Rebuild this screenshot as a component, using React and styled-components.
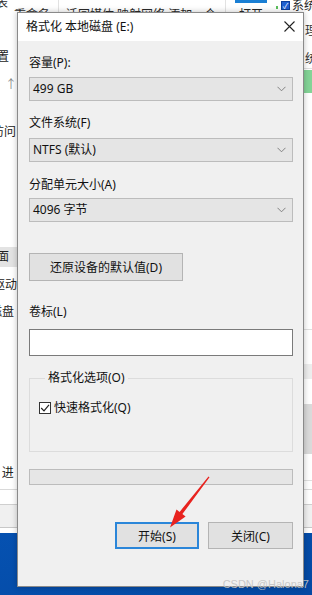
import React from 'react';
import styled, { createGlobalStyle } from 'styled-components';

const GlobalStyle = createGlobalStyle`
  html, body {
    margin: 0;
    padding: 0;
  }
  body {
    width: 312px;
    height: 595px;
    overflow: hidden;
    font-family: "Noto Sans", "Noto Sans CJK SC", sans-serif;
    font-size: 12px;
    color: #1a1a1a;
  }
`;

const Chevron = () => (
  <svg width="9" height="6" viewBox="0 0 9 6">
    <polyline points="0.5,0.8 4.5,4.8 8.5,0.8" fill="none" stroke="#777" strokeWidth="0.9" />
  </svg>
);

const CloseIcon = () => (
  <svg width="11" height="11" viewBox="0 0 11 11">
    <path d="M0.5 0.5 L10.5 10.5 M10.5 0.5 L0.5 10.5" stroke="#222" strokeWidth="1.1" />
  </svg>
);

const CheckMark = () => (
  <svg width="10" height="10" viewBox="0 0 10 10">
    <polyline points="1.2,5 4,7.8 9,1.8" fill="none" stroke="#222" strokeWidth="1.2" />
  </svg>
);

const App = () => {
  return (
    <>
      <GlobalStyle />
      <Desktop>
        <Explorer>
          <Ribbon>
            <RibbonClip>
              <RibbonText $x={-4} $y={-5}>表</RibbonText>
              <RibbonText $x={14} $y={7}>重命名</RibbonText>
              <RibbonSep $x={58} />
              <RibbonText $x={66} $y={7}>迁回媒体 映射网络 添加一个</RibbonText>
              <RibbonSep $x={225} />
              <OpenBlock>
                <BlueBar />
                <RibbonLabel>打开</RibbonLabel>
              </OpenBlock>
              <MiniDot />
              <MiniCheck>✓</MiniCheck>
              <RibbonText $x={292} $y={-2}>系统</RibbonText>
            </RibbonClip>
          </Ribbon>
          <ExplorerBody>
            <NavPane>
              <NavItem $mt={29} $pr={8}>位置</NavItem>
              <NavItem $mt={12} $muted>↑</NavItem>
              <NavItem $mt={31} $pr={1}>访问</NavItem>
              <NavItem $mt={107} $selected>面</NavItem>
              <NavItem $mt={10}>驱动</NavItem>
              <NavItem $mt={11} $pr={3}>磁盘</NavItem>
              <NavItem $mt={145}>l&nbsp;&nbsp;进&nbsp;</NavItem>
            </NavPane>
            <Covered />
            <SidePane>
              <SideText $mt={3}>理</SideText>
              <SideText $mt={12}>统</SideText>
              <SideLine $mt={1} />
              <GreenBar />
              <SideLine $mt={236} />
              <SideBand $mt={34} $h={15} />
              <SideBand $mt={25} $h={50} $dark />
              <SideLine $mt={26} />
            </SidePane>
          </ExplorerBody>
          <Footer>
            <StatusBand />
          </Footer>
        </Explorer>

        <Dialog>
          <TitleBar>
            <Title>格式化 本地磁盘 (E:)</Title>
            <CloseIcon />
          </TitleBar>
          <Body>
            <Label $mt={14}>容量(P):</Label>
            <Combo $mt={6}>
              <span>499 GB</span>
              <Chevron />
            </Combo>
            <Label $mt={14}>文件系统(F)</Label>
            <Combo $mt={7}>
              <span>NTFS (默认)</span>
              <Chevron />
            </Combo>
            <Label $mt={15}>分配单元大小(A)</Label>
            <Combo $mt={5}>
              <span>4096 字节</span>
              <Chevron />
            </Combo>
            <RestoreButton>还原设备的默认值(D)</RestoreButton>
            <Label $mt={23}>卷标(L)</Label>
            <TextInput />
            <GroupBox>
              <Legend>格式化选项(O)</Legend>
              <CheckRow>
                <CheckBox>
                  <CheckMark />
                </CheckBox>
                快速格式化(Q)
              </CheckRow>
            </GroupBox>
            <Progress />
            <ButtonRow>
              <DialogButton $primary>开始(S)</DialogButton>
              <DialogButton>关闭(C)</DialogButton>
            </ButtonRow>
          </Body>
        </Dialog>

        <Arrow viewBox="0 0 312 595">
          <polygon
            points="209.5,477.3 182.4,514.1 185.6,516.5 170,527.5 176.5,509.6 179.6,511.9 208.5,476.6"
            fill="#e8231f"
          />
        </Arrow>
        <Watermark>CSDN @Halona7</Watermark>
      </Desktop>
    </>
  );
};

export default App;

const Desktop = styled.div`
  position: relative;
  width: 312px;
  height: 595px;
  overflow: hidden;
  background: linear-gradient(165deg, #0d6fd6 0%, #085ec6 45%, #0449a3 100%);
`;

const Explorer = styled.div`
  height: 533px;
  background: #ffffff;
  display: flex;
  flex-direction: column;
`;

const Ribbon = styled.div`
  height: 20px;
  flex-shrink: 0;
  background: #ffffff;
`;

const RibbonClip = styled.div`
  position: relative;
  height: 12px;
  overflow: hidden;
`;

const RibbonText = styled.span`
  position: absolute;
  left: ${(p) => p.$x}px;
  top: ${(p) => p.$y}px;
  line-height: 16px;
  white-space: nowrap;
  color: #2b2b2b;
`;

const RibbonSep = styled.div`
  position: absolute;
  left: ${(p) => p.$x}px;
  top: 0;
  width: 1px;
  height: 12px;
  background: #e2e2e2;
`;

const OpenBlock = styled.div`
  position: absolute;
  left: 235px;
  top: 0;
  width: 32px;
  display: flex;
  flex-direction: column;
  align-items: center;
`;

const BlueBar = styled.div`
  width: 32px;
  height: 3px;
  background: #1a7fd4;
`;

const RibbonLabel = styled.span`
  margin-top: 4px;
  line-height: 16px;
  color: #2b2b2b;
`;

const MiniDot = styled.div`
  position: absolute;
  left: 276px;
  top: 6px;
  width: 2px;
  height: 3px;
  background: #5bbf5b;
`;

const MiniCheck = styled.div`
  position: absolute;
  left: 281px;
  top: 1px;
  width: 9px;
  height: 9px;
  background: #1f5fd0;
  border: 1px solid #0c3f9a;
  box-sizing: border-box;
  color: #fff;
  font-size: 8px;
  line-height: 8px;
  text-align: center;
`;

const ExplorerBody = styled.div`
  flex: 1;
  display: flex;
`;

const NavPane = styled.div`
  width: 17px;
  display: flex;
  flex-direction: column;
  overflow: hidden;
`;

const NavItem = styled.div`
  display: flex;
  justify-content: flex-end;
  white-space: nowrap;
  margin-top: ${(p) => p.$mt || 0}px;
  height: ${(p) => (p.$selected ? 20 : 16)}px;
  line-height: ${(p) => (p.$selected ? 20 : 16)}px;
  color: ${(p) => (p.$muted ? '#8a8a8a' : '#222')};
  background: ${(p) => (p.$selected ? '#e3e3e3' : 'transparent')};
  padding-right: ${(p) => (p.$selected ? 8 : p.$pr || 0)}px;
`;

const Covered = styled.div`
  flex: 1;
`;

const SidePane = styled.div`
  width: 8px;
  display: flex;
  flex-direction: column;
  overflow: hidden;
`;

const SideText = styled.div`
  margin-top: ${(p) => p.$mt}px;
  margin-left: 1px;
  height: 16px;
  line-height: 16px;
  white-space: nowrap;
  color: #333;
`;

const SideLine = styled.div`
  height: 1px;
  margin-top: ${(p) => p.$mt}px;
  background: #e0e0e0;
`;

const GreenBar = styled.div`
  height: 23px;
  margin-top: 1px;
  background: #84d497;
`;

const SideBand = styled.div`
  height: ${(p) => p.$h}px;
  margin-top: ${(p) => p.$mt}px;
  background: ${(p) => (p.$dark ? '#dadada' : '#ededed')};
`;

const Footer = styled.div`
  height: 44px;
  flex-shrink: 0;
  border-top: 1px solid #d9d9d9;
  box-sizing: border-box;
  padding-top: 14px;
  background: #ffffff;
`;

const StatusBand = styled.div`
  height: 24px;
  background: #f0f0f0;
  border-top: 1px solid #cfcfcf;
  border-bottom: 1px solid #c8c8c8;
  box-sizing: border-box;
`;

const Dialog = styled.div`
  position: absolute;
  left: 17px;
  top: 12px;
  width: 287px;
  box-sizing: border-box;
  border: 1px solid #8a8a8a;
  background: #f0f0f0;
  box-shadow: 0 0 6px rgba(0, 0, 0, 0.25);
  display: flex;
  flex-direction: column;
`;

const TitleBar = styled.div`
  height: 28px;
  background: #ffffff;
  display: flex;
  align-items: center;
  justify-content: space-between;
  padding: 0 8px 1px 8px;
  box-sizing: border-box;
`;

const Title = styled.span`
  font-size: 12px;
  line-height: 16px;
  color: #111;
`;

const Body = styled.div`
  display: flex;
  flex-direction: column;
  padding: 0 10px 37px 11px;
`;

const Label = styled.div`
  margin-top: ${(p) => p.$mt}px;
  line-height: 16px;
  height: 16px;
  color: #111;
`;

const Combo = styled.div`
  margin-top: ${(p) => p.$mt}px;
  height: 24px;
  box-sizing: border-box;
  border: 1px solid #bcbcbc;
  background: #e5e5e5;
  display: flex;
  align-items: center;
  justify-content: space-between;
  padding: 0 6px 0 3px;
  line-height: 16px;
  color: #111;
`;

const RestoreButton = styled.div`
  margin-top: 31px;
  width: 154px;
  height: 28px;
  box-sizing: border-box;
  border: 1px solid #b4b4b4;
  background: #e1e1e1;
  display: flex;
  align-items: center;
  justify-content: center;
  color: #111;
`;

const TextInput = styled.div`
  margin-top: 9px;
  height: 27px;
  box-sizing: border-box;
  border: 1px solid #7a7a7a;
  background: #ffffff;
`;

const GroupBox = styled.fieldset`
  margin: 14px 0 0 0;
  min-width: 0;
  padding: 0 0 35px 9px;
  border: 1px solid #dcdcdc;
`;

const Legend = styled.legend`
  margin-left: 6px;
  padding: 0 3px;
  line-height: 16px;
  color: #111;
`;

const CheckRow = styled.div`
  margin-top: 14px;
  height: 16px;
  display: flex;
  align-items: center;
  gap: 3px;
  line-height: 16px;
  color: #111;
`;

const CheckBox = styled.div`
  width: 12px;
  height: 12px;
  box-sizing: border-box;
  border: 1px solid #333;
  background: #ffffff;
  display: flex;
  align-items: center;
  justify-content: center;
`;

const Progress = styled.div`
  margin-top: 17px;
  height: 16px;
  box-sizing: border-box;
  border: 1px solid #bcbcbc;
  background: #e6e6e6;
`;

const ButtonRow = styled.div`
  margin-top: 37px;
  display: flex;
  justify-content: flex-end;
  gap: 9px;
`;

const DialogButton = styled.div`
  width: ${(p) => (p.$primary ? 84 : 85)}px;
  height: 27px;
  box-sizing: border-box;
  border: ${(p) => (p.$primary ? '2px solid #2b86d9' : '1px solid #b4b4b4')};
  background: #e1e1e1;
  display: flex;
  align-items: center;
  justify-content: center;
  color: #111;
`;

const Arrow = styled.svg`
  position: absolute;
  left: 0;
  top: 0;
  width: 312px;
  height: 595px;
  pointer-events: none;
`;

const Watermark = styled.div`
  position: absolute;
  right: 3px;
  bottom: 5px;
  font-family: "Liberation Sans", Arial, sans-serif;
  font-size: 11px;
  line-height: 12px;
  color: rgba(196, 196, 196, 0.92);
  white-space: nowrap;
`;
